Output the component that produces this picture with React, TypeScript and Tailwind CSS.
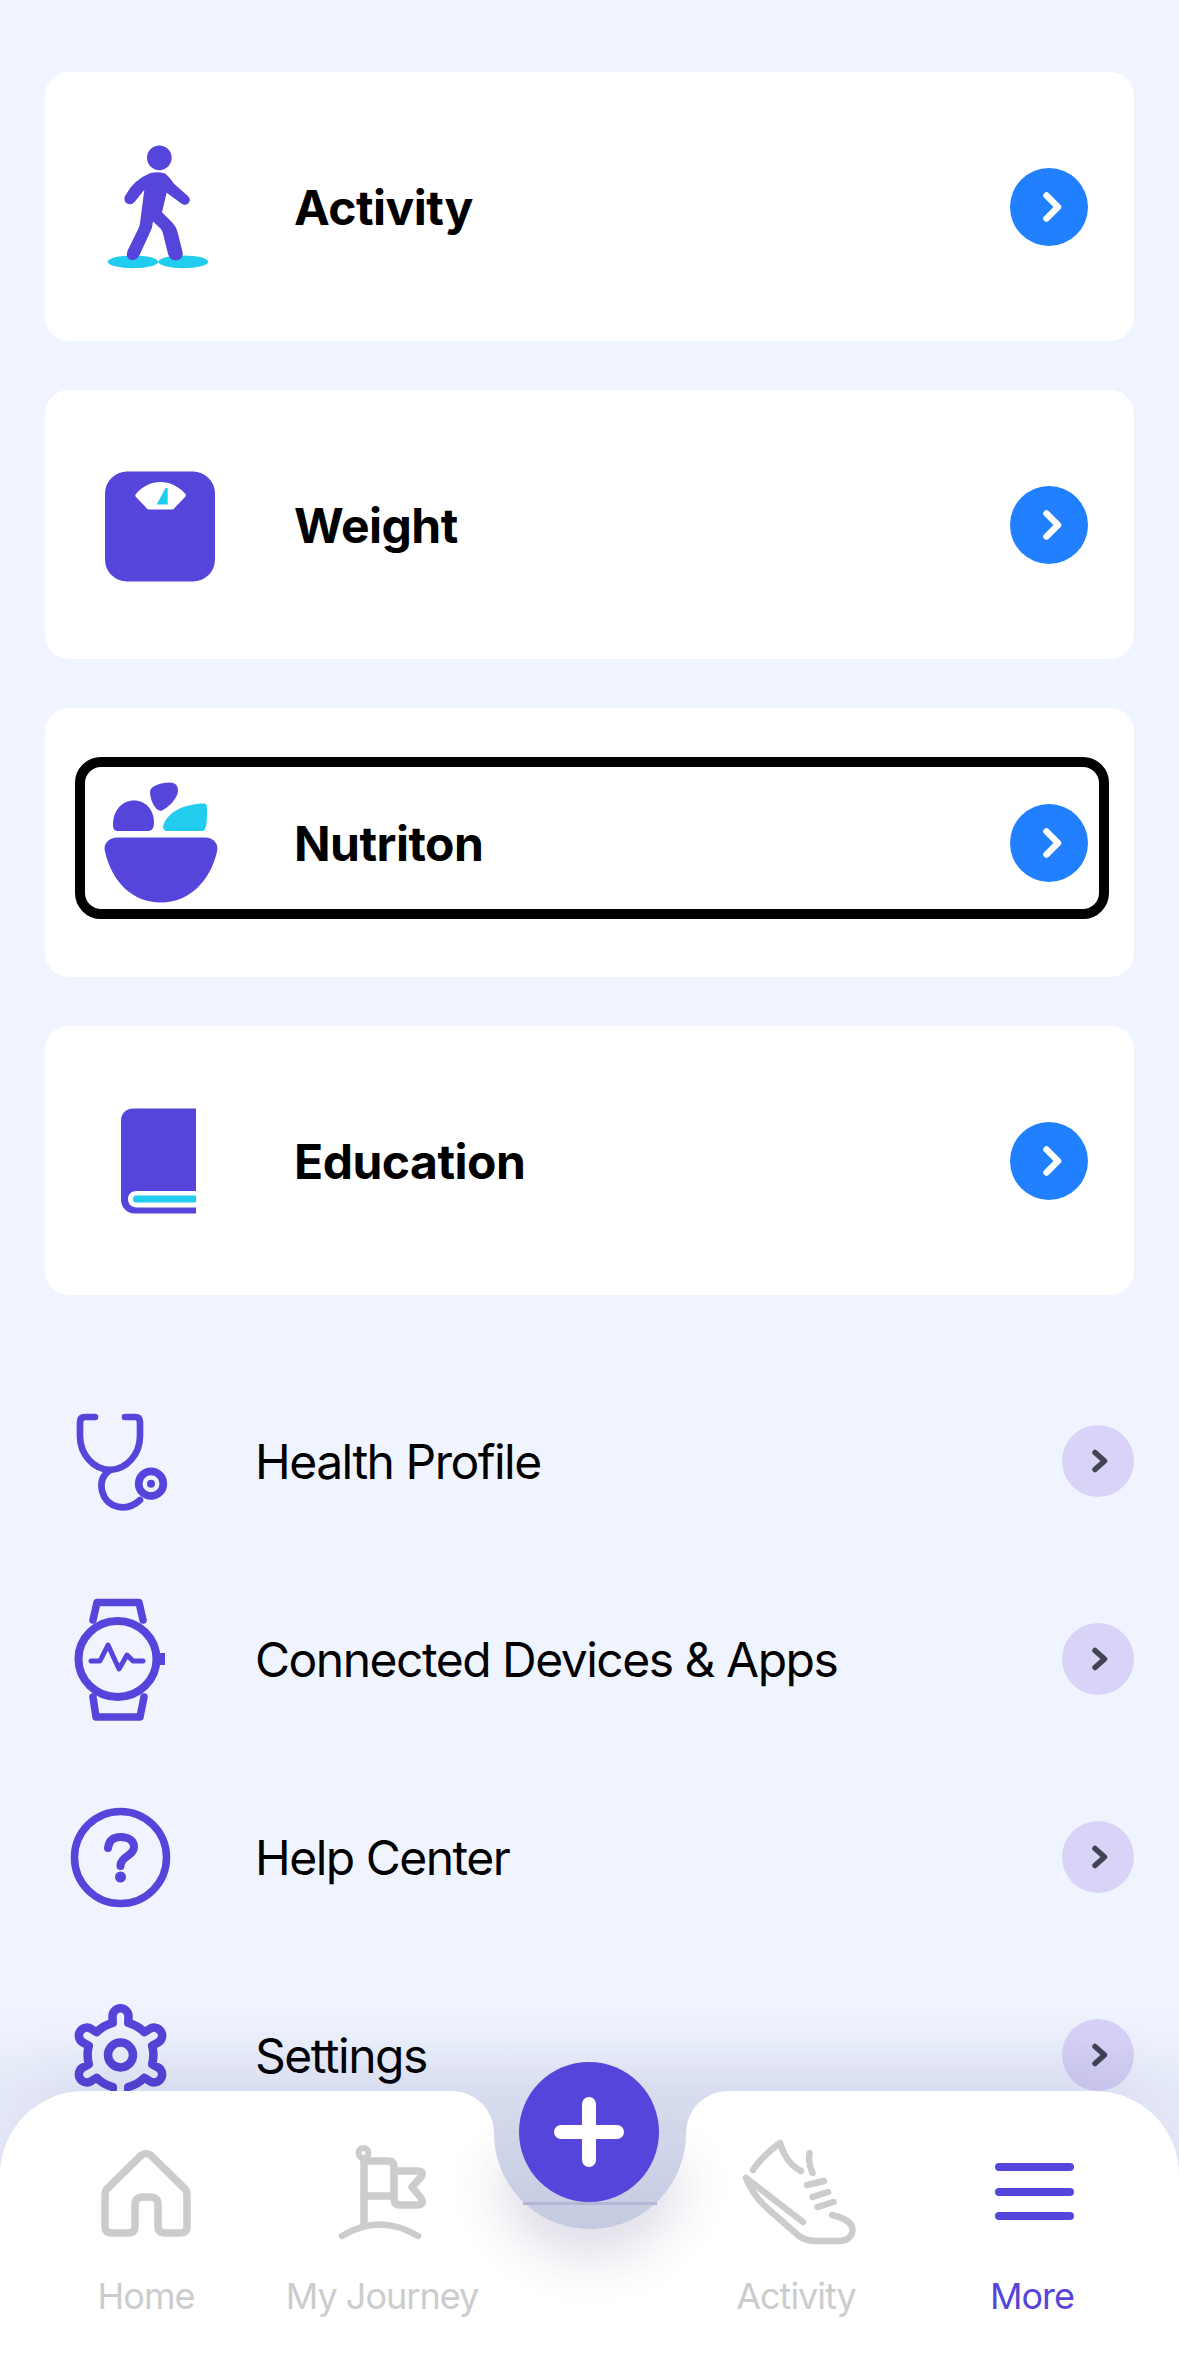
import React from "react";

const P = "#5545DA";
const C = "#22CCEE";
const G = "#CCCCCC";

function Blue() {
  return (
    <div className="ml-auto flex h-[78px] w-[78px] shrink-0 items-center justify-center rounded-full bg-[#2180FF]">
      <svg width="78" height="78" viewBox="0 0 78 78" fill="none">
        <path d="M36.5 27.5 48 39 36.5 50.5" stroke="#fff" strokeWidth="6.5" strokeLinecap="round" strokeLinejoin="round" />
      </svg>
    </div>
  );
}

function Lilac() {
  return (
    <div className="ml-auto flex h-[72px] w-[72px] shrink-0 items-center justify-center rounded-full bg-[#D9D3F7]">
      <svg width="72" height="72" viewBox="0 0 72 72" fill="none">
        <path d="M33 27.5 42.5 36 33 44.5" stroke="#3F4354" strokeWidth="5.5" strokeLinecap="round" strokeLinejoin="round" />
      </svg>
    </div>
  );
}

function IconActivity() {
  return (
    <svg width="120" height="130" viewBox="0 4.5 360 390" fill="none">
      <ellipse cx="99" cy="364" rx="76" ry="19" fill={C} />
      <ellipse cx="250" cy="364" rx="75" ry="19" fill={C} />
      <circle cx="178" cy="52" r="37" fill={P} />
      <path
        d="M150 98Q172 92 195 99 205 105 222 130L262 165Q276 178 265 188 257 197 245 190L200 157 186 215 216 245Q228 258 232 272L248 335Q250 358 228 360 210 360 204 340L188 275Q185 265 175 258L159 243Q158 262 148 280L118 345Q108 362 92 358 74 350 84 328L115 265Q120 255 121 240L133 148 105 183Q95 195 82 190 68 180 76 165 100 118 150 98Z"
        fill={P}
      />
    </svg>
  );
}

function IconWeight() {
  return (
    <svg width="120" height="120" viewBox="100 464.5 120 120" fill="none">
      <rect x="105" y="471" width="110" height="110" rx="22" fill={P} />
      <path d="M136 493.500C142 486 151 481.500 160.500 481.500 170 481.500 179 486 185.500 493.500 186 494.500 186 495.500 185 496.500L175 507C174 508.500 173 509 171 509H150C148 509 147 508.500 146 507L136 496.500C135 495.500 135 494.500 136 493.500Z" fill="#fff" />
      <path d="M165.500 487.500H167.700V504H156.700Z" fill={C} />
    </svg>
  );
}

function IconNutrition() {
  return (
    <svg width="120" height="122" viewBox="100 781.500 120 122" fill="none">
      <path d="M118 837H205C214 837 219 844 217 851 210 882 188 902 161 902 133 902 112 882 105 851 103 844 108 837 118 837Z" fill={P} />
      <path d="M118 830.500C114 830.500 113 828 113 824 113 810 122 800 134 800 146 800 154 810 154 822 154 827 152 830.500 148 830.500Z" fill={P} />
      <path d="M150 791C150 786 160 782 170 782 176 782 178 786 178 790 178 798 168 807 162 810 156 812 150 800 150 791Z" fill={P} />
      <path d="M167 830.500C164 830.500 163 828 163 826 166 812 185 803 204 803 206 803 207 805 207 807 207 815 207 822 206 826 205 829 204 830.500 202 830.500Z" fill={C} />
    </svg>
  );
}

function IconEducation() {
  return (
    <svg width="120" height="120" viewBox="100 1100.500 120 120" fill="none">
      <path d="M133 1108H196V1213H135C127 1213 121 1207 121 1199V1120C121 1113 126 1108 133 1108Z" fill={P} />
      <path d="M196 1190.500H137C131 1190.500 128 1194 128 1198.500 128 1203 131 1207 137 1207H196Z" fill="#fff" />
      <path d="M196 1195H136C134 1195 133 1196.500 133 1198.500 133 1200.500 134 1202 136 1202H196Z" fill={C} />
    </svg>
  );
}

function IconSteth() {
  return (
    <svg width="120" height="120" viewBox="0 0 360 360" fill="none" stroke={P} strokeLinecap="round" strokeLinejoin="round">
      <path d="M105 48H75Q60 48 60 63V105C60 160 100 205 150 207 200 205 240 160 240 105V63Q240 48 225 48H195" strokeWidth="20" />
      <path d="M150 207C125 225 120 250 128 275 140 320 200 335 240 297" strokeWidth="20" />
      <circle cx="273" cy="248" r="37" strokeWidth="23" />
      <circle cx="273" cy="248" r="12" fill={P} stroke="none" />
    </svg>
  );
}

function IconWatch() {
  return (
    <svg width="120" height="130" viewBox="60 1594 120 130" fill="none" stroke={P} strokeLinecap="round" strokeLinejoin="round">
      <ellipse cx="117.500" cy="1659" rx="39" ry="38" strokeWidth="8" />
      <path d="M93 1620 97 1602.500H139L143 1620" strokeWidth="7.500" />
      <path d="M93 1697 96 1717H140L144 1697" strokeWidth="7.500" />
      <rect x="159" y="1653" width="6" height="12" fill={P} strokeWidth="0" />
      <path d="M91 1661H100L108 1645 119 1669 127 1655 133 1661H143" strokeWidth="5" />
    </svg>
  );
}

function IconHelp() {
  return (
    <svg width="120" height="120" viewBox="60 1797 120 120" fill="none" stroke={P} strokeLinecap="round" strokeLinejoin="round">
      <circle cx="120.500" cy="1857.500" r="46" strokeWidth="7.500" />
      <path d="M108 1848C109 1840 114 1837 120.500 1837 129 1837 134 1841 134 1847 134 1856 120.500 1856 120.500 1866" strokeWidth="8" />
      <circle cx="120.500" cy="1877" r="5.500" fill={P} stroke="none" />
    </svg>
  );
}

function gearPath() {
  const cx = 120.5;
  const cy = 2055;
  const pt = (r: number, deg: number) => {
    const a = (deg * Math.PI) / 180;
    return `${(cx + r * Math.cos(a)).toFixed(2)} ${(cy + r * Math.sin(a)).toFixed(2)}`;
  };
  let d = "";
  for (let i = 0; i < 6; i++) {
    const t = -90 + i * 60;
    d += `${i === 0 ? "M" : "A 36 36 0 0 1"} ${pt(33, t - 13.6)} L ${pt(39, t - 11.8)} A 8 8 0 1 1 ${pt(39, t + 11.8)} L ${pt(33, t + 13.6)} `;
  }
  return d + `A 36 36 0 0 1 ${pt(33, -103.6)} Z`;
}

function IconGear() {
  return (
    <svg width="120" height="120" viewBox="60 1995 120 120" fill="none" stroke={P} strokeLinecap="round" strokeLinejoin="round">
      <path d={gearPath()} strokeWidth="8.500" />
      <circle cx="120.500" cy="2055" r="12.500" strokeWidth="8.500" />
    </svg>
  );
}

function TabHome() {
  return (
    <svg width="120" height="110" viewBox="86 2135 120 110" fill="none" stroke={G} strokeWidth="7.500" strokeLinecap="round" strokeLinejoin="round">
      <path d="M141 2155.500 107 2189Q105 2191 105 2195V2226Q105 2233 112 2233H128Q135 2233 135 2226V2205Q135 2197 143 2197H150Q158 2197 158 2205V2226Q158 2233 165 2233H180Q187 2233 187 2226V2195Q187 2191 185 2189L151 2155.500Q146 2151.500 141 2155.500Z" />
    </svg>
  );
}

function TabFlag() {
  return (
    <svg width="120" height="110" viewBox="322 2135 120 110" fill="none" stroke={G} strokeWidth="7.500" strokeLinecap="round" strokeLinejoin="round">
      <circle cx="363.500" cy="2153" r="5" strokeWidth="6" />
      <path d="M364 2160V2224" />
      <path d="M364 2161H388Q394 2161 394 2167V2196H364" />
      <path d="M396 2171H417Q425 2171 421 2177L412 2187 421 2198Q425 2205 417 2205H400Q394 2205 394 2199" />
      <path d="M342 2236Q379 2213 418 2236" strokeWidth="6.500" />
    </svg>
  );
}

function TabShoe() {
  return (
    <svg width="120" height="110" viewBox="735 2135 120 110" fill="none" stroke={G} strokeWidth="6.500" strokeLinecap="round" strokeLinejoin="round" className="overflow-visible">
      <path d="M752 2170C759 2159 768 2151 779 2143 783 2155 788 2165 800 2171" />
      <path d="M808.500 2153C807 2160 809 2167 811.500 2173" />
      <path d="M806 2185 823 2181M811.500 2197 827 2192M816.500 2207 832.500 2202" />
      <path d="M802 2222 745 2178C750 2190 757 2200 766 2208L798 2236Q805 2241 815 2241H838C848 2241 853 2234 851 2227 849 2221 840 2217 831 2215" />
    </svg>
  );
}

function TabMenu() {
  return (
    <svg width="120" height="110" viewBox="971 2135 120 110" fill="none" stroke={P} strokeWidth="8" strokeLinecap="round">
      <path d="M998 2167H1069M998 2192H1069M998 2216H1069" />
    </svg>
  );
}

function Tab({ label, active, children }: { label: string; active?: boolean; children: React.ReactNode }) {
  return (
    <div className="flex w-[220px] shrink-0 flex-col items-center">
      <div className="h-[110px]">{children}</div>
      <div className={`mt-[29px] whitespace-nowrap text-[36px] leading-[44px] tracking-[-1px] ${active ? "text-[#5545DA]" : "text-[#CCCCCC]"}`}>{label}</div>
    </div>
  );
}

const cards = [
  { t: "Activity", i: <IconActivity /> },
  { t: "Weight", i: <IconWeight /> },
  { t: "Nutriton", i: <IconNutrition />, focus: true },
  { t: "Education", i: <IconEducation /> },
];

const rows = [
  { t: "Health Profile", i: <IconSteth /> },
  { t: "Connected Devices & Apps", i: <IconWatch /> },
  { t: "Help Center", i: <IconHelp /> },
  { t: "Settings", i: <IconGear /> },
];

export default function App() {
  return (
    <div className="relative h-[2356px] w-[1179px] overflow-hidden bg-[#F0F4FF] font-['Inter',sans-serif] text-black">
      <div className="flex flex-col gap-[49px] px-[45px] pt-[72px]">
        {cards.map((c) => (
          <div key={c.t} className="relative flex h-[269px] items-center rounded-[24px] bg-white pl-[55px] pr-[46px]">
            <div className="flex w-[120px] shrink-0 justify-center">{c.i}</div>
            <div className="ml-[74px] pt-[3px] text-[48px] font-bold leading-none tracking-[-0.5px]">{c.t}</div>
            <Blue />
            {c.focus && (
              <div className="absolute left-[30px] right-[25px] top-[49px] h-[162px] rounded-[26px] border-[10px] border-black" />
            )}
          </div>
        ))}
      </div>

      <div className="mt-[67px] flex flex-col px-[45px]">
        {rows.map((r) => (
          <div key={r.t} className="flex h-[198px] items-center pl-[15px]">
            <div className="flex w-[120px] shrink-0 justify-center">{r.i}</div>
            <div className="ml-[75px] pt-[2px] text-[48px] font-normal leading-none tracking-[-1.5px]">{r.t}</div>
            <Lilac />
          </div>
        ))}
      </div>

      <div className="absolute inset-x-0 bottom-0 flex h-[265px]">
        <div className="absolute inset-x-0 top-[-83px] h-[221px] bg-[linear-gradient(rgba(30,45,110,0)_0%,rgba(30,45,110,0.03)_14.5%,rgba(30,45,110,0.115)_37.5%,rgba(30,45,110,0.21)_100%)] [mask-image:linear-gradient(90deg,rgba(0,0,0,0.45),black_110px,black_1069px,rgba(0,0,0,0.45))]" />
        <div className="relative flex w-[494px] gap-[16px] rounded-tl-[84px] rounded-tr-[42px] bg-white pl-[36px] pt-[44px]">
          <Tab label="Home"><TabHome /></Tab>
          <Tab label="My Journey"><TabFlag /></Tab>
        </div>
        <div className="relative z-10 w-[192px] pt-[42px]">
          <div className="relative h-[223px] bg-[radial-gradient(circle_at_96px_0px,transparent_95.5px,white_96.5px)]">
            <div className="absolute inset-x-0 top-0 h-[96px] rounded-b-[96px] shadow-[0_30px_50px_rgba(60,50,110,0.16)]" />
            <div className="absolute left-[29px] top-[69px] h-[3px] w-[134px] bg-[#B4B7D4]" />
          </div>
          <div className="absolute left-[25px] top-[-29px] flex h-[140px] w-[140px] items-center justify-center rounded-full bg-[#5545DA]">
            <svg width="72" height="72" viewBox="0 0 72 72" fill="none">
              <path d="M36 8V64M8 36H64" stroke="#fff" strokeWidth="14" strokeLinecap="round" />
            </svg>
          </div>
        </div>
        <div className="relative flex flex-1 gap-[16px] rounded-tl-[42px] rounded-tr-[84px] bg-white pt-[44px]">
          <Tab label="Activity"><TabShoe /></Tab>
          <Tab label="More" active><TabMenu /></Tab>
        </div>
      </div>
    </div>
  );
}
